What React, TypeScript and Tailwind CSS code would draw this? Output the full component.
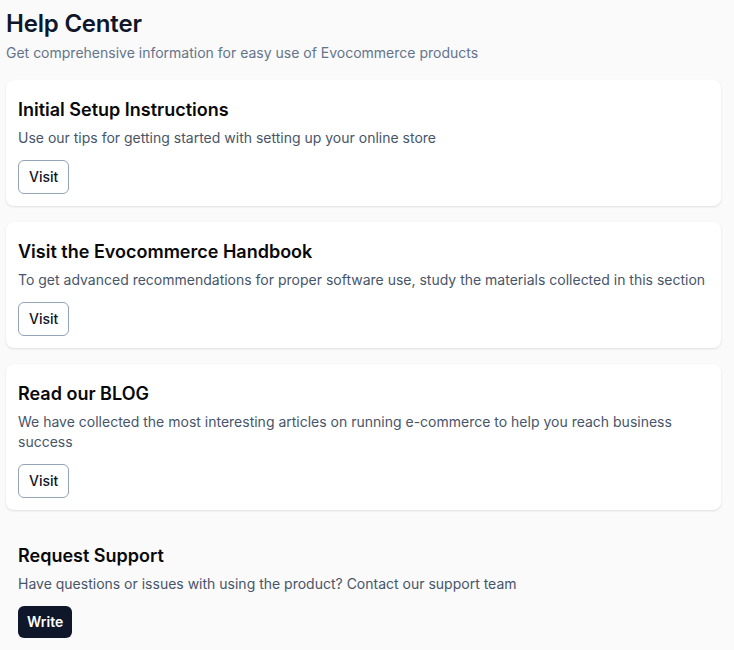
const cards = [
  {
    title: 'Initial Setup Instructions',
    text: 'Use our tips for getting started with setting up your online store',
  },
  {
    title: 'Visit the Evocommerce Handbook',
    text: 'To get advanced recommendations for proper software use, study the materials collected in this section',
  },
  {
    title: 'Read our BLOG',
    text: 'We have collected the most interesting articles on running e-commerce to help you reach business success',
  },
];

export default function App() {
  return (
    <div className="min-h-screen bg-[#fafafa] pl-[6px] pr-[13px] pt-[8px] pb-4 font-['Inter',sans-serif] text-[#0f172a]">
      <h1 className="text-[24px] font-semibold leading-8 tracking-[-0.2px]">Help Center</h1>
      <p className="mt-[3px] text-sm leading-5 text-[#64748b]">
        Get comprehensive information for easy use of Evocommerce products
      </p>

      <div className="mt-[17px] flex flex-col gap-4">
        {cards.map(card => (
          <div
            key={card.title}
            className="rounded-lg bg-white px-3 pt-4 pb-3 shadow-[0_1px_3px_rgba(0,0,0,0.08),0_1px_2px_rgba(0,0,0,0.04)]"
          >
            <h2 className="text-lg font-semibold leading-7 text-[#09090b]">{card.title}</h2>
            <p className="mt-1 text-sm leading-5 text-[#475569]">{card.text}</p>
            <button className="mt-3 h-[34px] rounded-md border border-[#94a3b8] bg-white px-[10px] text-sm font-medium text-[#0f172a]">
              Visit
            </button>
          </div>
        ))}

        <div className="px-3 pt-4 pb-3">
          <h2 className="text-lg font-semibold leading-7 text-[#09090b]">Request Support</h2>
          <p className="mt-1 text-sm leading-5 text-[#475569]">
            Have questions or issues with using the product? Contact our support team
          </p>
          <button className="mt-3 h-8 rounded-md bg-[#0f172a] px-[9px] text-sm font-semibold text-white">
            Write
          </button>
        </div>
      </div>
    </div>
  );
}
